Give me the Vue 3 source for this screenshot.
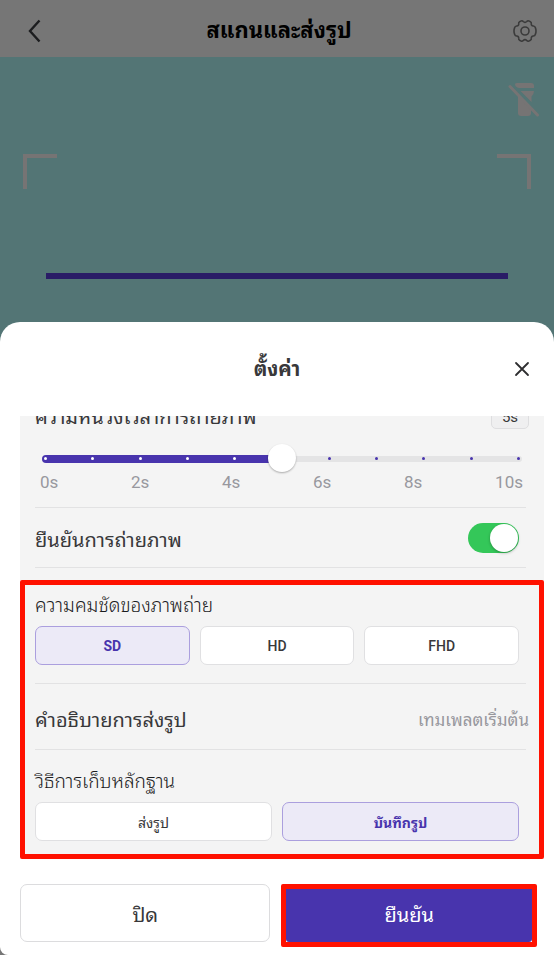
<script setup>
import { ref } from 'vue'

// slider
const delay = ref(5)
const steps = [0, 1, 2, 3, 4, 5, 6, 7, 8, 9, 10]
const marks = [0, 2, 4, 6, 8, 10]

// settings
const confirmPhoto = ref(true)
const qualities = ['SD', 'HD', 'FHD']
const quality = ref('SD')
const methods = ['ส่งรูป', 'บันทึกรูป']
const method = ref('บันทึกรูป')
</script>

<template>
  <div class="page">
    <header class="topbar">
      <button class="icon-btn" aria-label="กลับ">
        <svg width="14" height="24" viewBox="0 0 14 24"><path d="M12.500 1.500 L3 12 L12.500 22.500" fill="none" stroke="#1c1d1f" stroke-width="2.4" /></svg>
      </button>
      <h1>สแกนและส่งรูป</h1>
      <button class="icon-btn" aria-label="ตั้งค่า">
        <svg width="24" height="24" viewBox="0 0 24 24" fill="none" stroke="#3b3b3b" stroke-width="1.6" stroke-linejoin="round">
          <path d="M8.200 1.900 Q9.400 1.400 10.200 2.500 Q12 4.300 13.800 2.500 Q14.600 1.400 15.800 1.900 L17.400 2.700 Q18.600 3.300 18.300 4.800 Q18.100 6.700 20.300 7 Q21.900 7.200 22.300 8.500 L22.900 10.500 Q23.100 12 22.900 13.500 L22.300 15.500 Q21.900 16.800 20.300 17 Q18.100 17.300 18.300 19.200 Q18.600 20.700 17.400 21.300 L15.800 22.100 Q14.600 22.600 13.800 21.500 Q12 19.700 10.200 21.500 Q9.400 22.600 8.200 22.100 L6.600 21.300 Q5.400 20.700 5.700 19.200 Q5.900 17.300 3.700 17 Q2.100 16.800 1.700 15.500 L1.100 13.500 Q0.900 12 1.100 10.500 L1.700 8.500 Q2.100 7.200 3.700 7 Q5.900 6.700 5.700 4.800 Q5.400 3.300 6.600 2.700 Z" />
          <circle cx="12" cy="12" r="4" />
        </svg>
      </button>
    </header>

    <div class="camera">
      <button class="torch" aria-label="ไฟฉาย">
        <svg width="32" height="36" viewBox="0 0 32 36" fill="#767474">
          <path d="M9 2 H23 Q26 2 26 5 V7 H11 Q7 6 7 3 Q7.500 2 9 2 Z" />
          <path d="M12.500 10 H26 Q26 13 23.500 15.500 V21 Z" />
          <path d="M10 13 L23 26.500 V32 Q23 35 20 35 H13 Q10 35 10 32 Z" />
          <path d="M2 5.500 L29.500 34" fill="none" stroke="#767474" stroke-width="3" stroke-linecap="round" />
        </svg>
      </button>
      <div class="corners">
        <span class="corner left"></span>
        <span class="corner right"></span>
      </div>
      <div class="scan-line"></div>
    </div>

    <section class="sheet">
      <div class="sheet-head">
        <h2>ตั้งค่า</h2>
        <button class="icon-btn" aria-label="ปิด">
          <svg width="16" height="16" viewBox="0 0 16 16"><path d="M2 2 L14 14 M14 2 L2 14" stroke="#2e2e30" stroke-width="1.8" stroke-linecap="round" /></svg>
        </button>
      </div>

      <div class="settings">
        <div class="block">
          <div class="row delay">
            <label for="delay">ความหน่วงเวลาการถ่ายภาพ</label>
            <output for="delay">{{ delay }}s</output>
          </div>
          <div class="slider">
            <div class="rail"></div>
            <div class="fill" :style="{ width: delay * 10 + '%' }"></div>
            <div class="dots">
              <i v-for="s in steps" :key="s" :class="{ on: s < delay }"></i>
            </div>
            <input id="delay" v-model="delay" type="range" min="0" max="10" />
          </div>
          <div class="marks">
            <span v-for="m in marks" :key="m">{{ m }}s</span>
          </div>
          <hr />
          <div class="row switch-row">
            <label for="confirm">ยืนยันการถ่ายภาพ</label>
            <input id="confirm" v-model="confirmPhoto" type="checkbox" class="switch" />
          </div>
          <hr />
        </div>

        <div class="marked">
          <h3>ความคมชัดของภาพถ่าย</h3>
          <div class="options">
            <button v-for="q in qualities" :key="q" :class="{ active: q === quality }" @click="quality = q">{{ q }}</button>
          </div>
          <hr />
          <div class="row template-row">
            <span>คำอธิบายการส่งรูป</span>
            <span class="value">เทมเพลตเริ่มต้น</span>
          </div>
          <hr />
          <h3 class="method-title">วิธีการเก็บหลักฐาน</h3>
          <div class="options thai">
            <button v-for="m in methods" :key="m" :class="{ active: m === method }" @click="method = m">{{ m }}</button>
          </div>
        </div>
      </div>

      <div class="actions">
        <button class="cancel">ปิด</button>
        <div class="confirm-frame">
          <button class="confirm">ยืนยัน</button>
        </div>
      </div>
    </section>
  </div>
</template>

<style>
body {
  margin: 0;
  background: #767676;
}
</style>

<style scoped>
* {
  box-sizing: border-box;
}

.page {
  font-family: Roboto, "Noto Sans Thai Looped", Loma, "Noto Sans", sans-serif;
  color: #38383a;
  overflow: hidden;
}

button {
  font-family: inherit;
  color: inherit;
  padding: 0;
  cursor: pointer;
}

h1, h2, h3 {
  margin: 0;
}

.icon-btn, .torch {
  border: none;
  background: none;
  display: flex;
  align-items: center;
  justify-content: center;
}

.topbar {
  height: 57px;
  background: #767676;
  display: flex;
  align-items: center;
  justify-content: space-between;
  padding: 4px 17px 0 21px;
}

.topbar .icon-btn {
  width: 25px;
  height: 24px;
}

.topbar h1 {
  font-size: 22px;
  line-height: 32px;
  color: #000;
}

.camera {
  height: 285px;
  background: #537575;
  display: flex;
  flex-direction: column;
}

.torch {
  align-self: flex-end;
  margin: 24px 14px 0 0;
}

.corners {
  display: flex;
  justify-content: space-between;
  margin: 37px 23px 0;
}

.corner {
  width: 34px;
  height: 35px;
  border-top: 4px solid #767474;
}

.corner.left {
  border-left: 4px solid #767474;
}

.corner.right {
  border-right: 4px solid #767474;
}

.scan-line {
  height: 6px;
  margin: 84px 46px 0;
  background: #2a1c66;
}

.sheet {
  position: relative;
  margin-top: -20px;
  background: #fff;
  border-radius: 20px 20px 0 8px;
  padding-bottom: 8px;
}

.sheet-head {
  height: 94px;
  display: grid;
  grid-template-columns: 40px 1fr 40px;
  align-items: center;
  padding: 0 12px;
}

.sheet-head h2 {
  grid-column: 2;
  text-align: center;
  font-size: 20px;
  line-height: 32px;
}

.settings {
  margin: 0 10px 0 20px;
  background: #f4f4f4;
  overflow: hidden;
}

.block {
  padding: 0 15px 12px;
}

.row {
  display: flex;
  align-items: center;
  justify-content: space-between;
  font-size: 20px;
}

hr {
  height: 1px;
  border: none;
  background: #e2e2e3;
  margin: 0 3px 0 0;
}

.delay {
  height: 28px;
  margin-top: -15px;
}

output {
  width: 38px;
  height: 28px;
  border: 1px solid #dedee0;
  border-radius: 5px;
  background: #efeff0;
  font-size: 15px;
  line-height: 30px;
  text-align: center;
}

.slider {
  position: relative;
  height: 28px;
  margin: 16px 10px 0;
}

.rail {
  position: absolute;
  inset: 11px -3px 11px -3px;
  border-radius: 3px;
  background: #e4e4e5;
}

.fill {
  position: absolute;
  left: -3px;
  top: 10px;
  height: 8px;
  border-radius: 4px;
  background: #4834ad;
}

.dots {
  position: absolute;
  inset: 12px -1px 13px -1px;
  display: flex;
  justify-content: space-between;
}

.dots i {
  width: 3px;
  height: 3px;
  border-radius: 50%;
  background: #4834ad;
}

.dots .on {
  background: #fff;
}

.slider input {
  position: absolute;
  top: -1px;
  left: -14px;
  width: calc(100% + 28px);
  height: 28px;
  margin: 0;
  appearance: none;
  background: none;
}

.slider input::-webkit-slider-thumb {
  appearance: none;
  width: 28px;
  height: 28px;
  border-radius: 50%;
  background: #fff;
  box-shadow: 0 1px 2px rgba(0, 0, 0, 0.3);
}

.marks {
  display: flex;
  justify-content: space-between;
  height: 34px;
  margin: 0 5px;
  padding-right: 1px;
  font-size: 17px;
  line-height: 18px;
  color: #98989e;
}

.switch-row {
  height: 59px;
  padding-right: 10px;
}

.switch {
  appearance: none;
  width: 51px;
  height: 30px;
  margin: 0;
  padding: 1px;
  border-radius: 15px;
  background: #c8c8ca;
  display: flex;
}

.switch::before {
  content: "";
  width: 28px;
  height: 28px;
  border-radius: 50%;
  background: #fff;
  box-shadow: 0 1px 3px rgba(0, 0, 0, 0.3);
}

.switch:checked {
  background: #34c759;
  justify-content: flex-end;
}

.marked {
  border: 5px solid #ff1100;
  border-radius: 2px;
  padding: 5px 10px 13px;
}

h3 {
  font-size: 19px;
  line-height: 32px;
  font-weight: 300;
  color: #1c1c1e;
}

.options {
  display: flex;
  gap: 10px;
  padding: 4px 10px 18px 0;
}

.options button {
  flex: 1;
  height: 39px;
  border: 1px solid #e0e0e2;
  border-radius: 7px;
  background: #fff;
  font-size: 14px;
  font-weight: 500;
}

.options.thai {
  padding-bottom: 0;
}

.thai button {
  font-weight: 400;
}

.options .active {
  background: #eceaf7;
  border-color: #ab9fde;
  color: #4834ad;
  font-weight: 700;
}

.template-row {
  height: 65px;
  padding-top: 3px;
}

.value {
  font-size: 17px;
  color: #98989e;
}

.method-title {
  padding-top: 16px;
}

.actions {
  display: grid;
  grid-template-columns: 50fr 51fr;
  gap: 11px;
  align-items: start;
  padding: 25px 17px 0 20px;
}

.actions button {
  width: 100%;
  font-size: 20px;
}

.cancel {
  height: 58px;
  border: 1px solid #dcdcde;
  border-radius: 7px;
  background: #fff;
}

.confirm-frame {
  border: 5px solid #ff1100;
  border-radius: 2px;
  background: #fff;
}

.confirm {
  display: block;
  height: 53px;
  border: none;
  border-radius: 0 0 3px 3px;
  background: #4834ad;
}

.actions .confirm {
  color: #fff;
  padding-bottom: 6px;
}
</style>
